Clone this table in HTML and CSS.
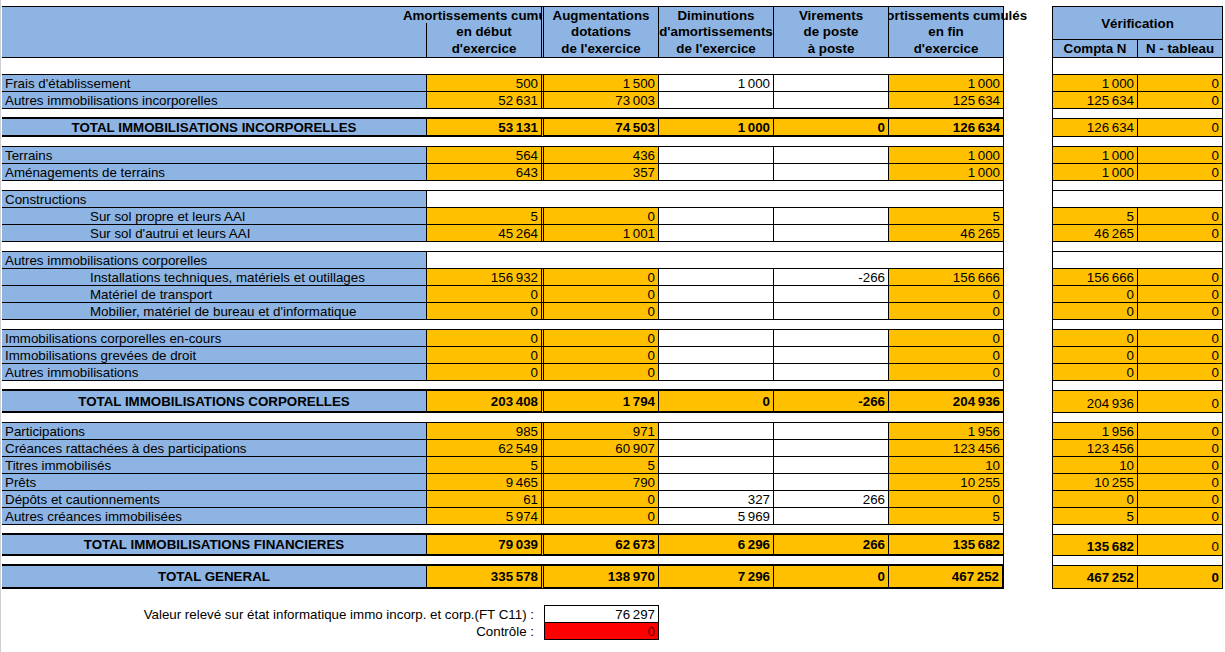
FILE: index.html
```html
<!DOCTYPE html>
<html lang="fr">
<head>
<meta charset="utf-8">
<title>Tableau des amortissements</title>
<link rel="stylesheet" href="styles.css">
</head>
<body>
<div class="sheet">
<table class="grid">
<colgroup>
<col class="c-lab"><col class="c-a"><col class="c-n"><col class="c-n"><col class="c-n"><col class="c-n"><col class="c-gap"><col class="c-f"><col class="c-g">
</colgroup>
<tbody>
<tr class="h1">
  <td class="lab hd"></td>
  <td class="cA hd"><div class="clipL"><div class="ovl"><span>Amortissements cumulés</span></div></div></td>
  <td class="cn hd">Augmentations</td>
  <td class="cn hd">Diminutions</td>
  <td class="cn hd">Virements</td>
  <td class="cn hd"><div class="clipR"><div class="ovl"><span>Amortissements cumulés</span></div></div></td>
  <td class="gap"></td>
  <td class="cF hd verif" colspan="2" rowspan="2">Vérification</td>
</tr>
<tr class="h2">
  <td class="lab hd"></td>
  <td class="cA hd">en début</td>
  <td class="cn hd">dotations</td>
  <td class="cn hd">d'amortissements</td>
  <td class="cn hd">de poste</td>
  <td class="cn hd">en fin</td>
  <td class="gap"></td>
</tr>
<tr class="h3">
  <td class="lab hd"></td>
  <td class="cA hd">d'exercice</td>
  <td class="cn hd">de l'exercice</td>
  <td class="cn hd">de l'exercice</td>
  <td class="cn hd">à poste</td>
  <td class="cn hd">d'exercice</td>
  <td class="gap"></td>
  <td class="cF hd">Compta N</td>
  <td class="cG hd">N - tableau</td>
</tr>
<tr class="blank"><td colspan="6" class="spm"></td><td class="gap"></td><td colspan="2" class="spv"></td></tr>

<tr class="r"><td class="lab">Frais d'établissement</td><td class="cA o">500</td><td class="cn o">1&#8239;500</td><td class="cn w">1&#8239;000</td><td class="cn w"></td><td class="cn o">1&#8239;000</td><td class="gap"></td><td class="cF o">1&#8239;000</td><td class="cG o">0</td></tr>
<tr class="r"><td class="lab">Autres immobilisations incorporelles</td><td class="cA o">52&#8239;631</td><td class="cn o">73&#8239;003</td><td class="cn w"></td><td class="cn w"></td><td class="cn o">125&#8239;634</td><td class="gap"></td><td class="cF o">125&#8239;634</td><td class="cG o">0</td></tr>
<tr class="sp"><td colspan="6" class="spm tk"></td><td class="gap"></td><td colspan="2" class="spv"></td></tr>
<tr class="t ti"><td class="lab">TOTAL IMMOBILISATIONS INCORPORELLES</td><td class="cA o">53&#8239;131</td><td class="cn o">74&#8239;503</td><td class="cn o">1&#8239;000</td><td class="cn o">0</td><td class="cn o">126&#8239;634</td><td class="gap"></td><td class="cF o">126&#8239;634</td><td class="cG o">0</td></tr>
<tr class="sp"><td colspan="6" class="spm"></td><td class="gap"></td><td colspan="2" class="spv"></td></tr>

<tr class="r"><td class="lab">Terrains</td><td class="cA o">564</td><td class="cn o">436</td><td class="cn w"></td><td class="cn w"></td><td class="cn o">1&#8239;000</td><td class="gap"></td><td class="cF o">1&#8239;000</td><td class="cG o">0</td></tr>
<tr class="r"><td class="lab">Aménagements de terrains</td><td class="cA o">643</td><td class="cn o">357</td><td class="cn w"></td><td class="cn w"></td><td class="cn o">1&#8239;000</td><td class="gap"></td><td class="cF o">1&#8239;000</td><td class="cG o">0</td></tr>
<tr class="sp"><td colspan="6" class="spm"></td><td class="gap"></td><td colspan="2" class="spv"></td></tr>

<tr class="r"><td class="lab">Constructions</td><td colspan="5" class="cn w"></td><td class="gap"></td><td colspan="2" class="cF w"></td></tr>
<tr class="r"><td class="lab sub">Sur sol propre et leurs AAI</td><td class="cA o">5</td><td class="cn o">0</td><td class="cn w"></td><td class="cn w"></td><td class="cn o">5</td><td class="gap"></td><td class="cF o">5</td><td class="cG o">0</td></tr>
<tr class="r"><td class="lab sub">Sur sol d'autrui et leurs AAI</td><td class="cA o">45&#8239;264</td><td class="cn o">1&#8239;001</td><td class="cn w"></td><td class="cn w"></td><td class="cn o">46&#8239;265</td><td class="gap"></td><td class="cF o">46&#8239;265</td><td class="cG o">0</td></tr>
<tr class="sp"><td colspan="6" class="spm"></td><td class="gap"></td><td colspan="2" class="spv"></td></tr>

<tr class="r"><td class="lab">Autres immobilisations corporelles</td><td colspan="5" class="cn w"></td><td class="gap"></td><td colspan="2" class="cF w"></td></tr>
<tr class="r"><td class="lab sub">Installations techniques, matériels et outillages</td><td class="cA o">156&#8239;932</td><td class="cn o">0</td><td class="cn w"></td><td class="cn w">-266</td><td class="cn o">156&#8239;666</td><td class="gap"></td><td class="cF o">156&#8239;666</td><td class="cG o">0</td></tr>
<tr class="r"><td class="lab sub">Matériel de transport</td><td class="cA o">0</td><td class="cn o">0</td><td class="cn w"></td><td class="cn w"></td><td class="cn o">0</td><td class="gap"></td><td class="cF o">0</td><td class="cG o">0</td></tr>
<tr class="r"><td class="lab sub">Mobilier, matériel de bureau et d'informatique</td><td class="cA o">0</td><td class="cn o">0</td><td class="cn w"></td><td class="cn w"></td><td class="cn o">0</td><td class="gap"></td><td class="cF o">0</td><td class="cG o">0</td></tr>
<tr class="sp"><td colspan="6" class="spm"></td><td class="gap"></td><td colspan="2" class="spv"></td></tr>

<tr class="r"><td class="lab">Immobilisations corporelles en-cours</td><td class="cA o">0</td><td class="cn o">0</td><td class="cn w"></td><td class="cn w"></td><td class="cn o">0</td><td class="gap"></td><td class="cF o">0</td><td class="cG o">0</td></tr>
<tr class="r"><td class="lab">Immobilisations grevées de droit</td><td class="cA o">0</td><td class="cn o">0</td><td class="cn w"></td><td class="cn w"></td><td class="cn o">0</td><td class="gap"></td><td class="cF o">0</td><td class="cG o">0</td></tr>
<tr class="r"><td class="lab">Autres immobilisations</td><td class="cA o">0</td><td class="cn o">0</td><td class="cn w"></td><td class="cn w"></td><td class="cn o">0</td><td class="gap"></td><td class="cF o">0</td><td class="cG o">0</td></tr>
<tr class="sp"><td colspan="6" class="spm tk"></td><td class="gap"></td><td colspan="2" class="spv"></td></tr>
<tr class="t tc"><td class="lab">TOTAL IMMOBILISATIONS CORPORELLES</td><td class="cA o">203&#8239;408</td><td class="cn o">1&#8239;794</td><td class="cn o">0</td><td class="cn o">-266</td><td class="cn o">204&#8239;936</td><td class="gap"></td><td class="cF o">204&#8239;936</td><td class="cG o">0</td></tr>
<tr class="sp"><td colspan="6" class="spm"></td><td class="gap"></td><td colspan="2" class="spv"></td></tr>

<tr class="r"><td class="lab">Participations</td><td class="cA o">985</td><td class="cn o">971</td><td class="cn w"></td><td class="cn w"></td><td class="cn o">1&#8239;956</td><td class="gap"></td><td class="cF o">1&#8239;956</td><td class="cG o">0</td></tr>
<tr class="r"><td class="lab">Créances rattachées à des participations</td><td class="cA o">62&#8239;549</td><td class="cn o">60&#8239;907</td><td class="cn w"></td><td class="cn w"></td><td class="cn o">123&#8239;456</td><td class="gap"></td><td class="cF o">123&#8239;456</td><td class="cG o">0</td></tr>
<tr class="r"><td class="lab">Titres immobilisés</td><td class="cA o">5</td><td class="cn o">5</td><td class="cn w"></td><td class="cn w"></td><td class="cn o">10</td><td class="gap"></td><td class="cF o">10</td><td class="cG o">0</td></tr>
<tr class="r"><td class="lab">Prêts</td><td class="cA o">9&#8239;465</td><td class="cn o">790</td><td class="cn w"></td><td class="cn w"></td><td class="cn o">10&#8239;255</td><td class="gap"></td><td class="cF o">10&#8239;255</td><td class="cG o">0</td></tr>
<tr class="r"><td class="lab">Dépôts et cautionnements</td><td class="cA o">61</td><td class="cn o">0</td><td class="cn w">327</td><td class="cn w">266</td><td class="cn o">0</td><td class="gap"></td><td class="cF o">0</td><td class="cG o">0</td></tr>
<tr class="r"><td class="lab">Autres créances immobilisées</td><td class="cA o">5&#8239;974</td><td class="cn o">0</td><td class="cn w">5&#8239;969</td><td class="cn w"></td><td class="cn o">5</td><td class="gap"></td><td class="cF o">5</td><td class="cG o">0</td></tr>
<tr class="sp"><td colspan="6" class="spm tk"></td><td class="gap"></td><td colspan="2" class="spv"></td></tr>
<tr class="t tf"><td class="lab">TOTAL IMMOBILISATIONS FINANCIERES</td><td class="cA o">79&#8239;039</td><td class="cn o">62&#8239;673</td><td class="cn o">6&#8239;296</td><td class="cn o">266</td><td class="cn o">135&#8239;682</td><td class="gap"></td><td class="cF o b">135&#8239;682</td><td class="cG o">0</td></tr>
<tr class="sp"><td colspan="6" class="spm tk"></td><td class="gap"></td><td colspan="2" class="spv"></td></tr>
<tr class="t tg"><td class="lab">TOTAL GENERAL</td><td class="cA o">335&#8239;578</td><td class="cn o">138&#8239;970</td><td class="cn o">7&#8239;296</td><td class="cn o">0</td><td class="cn o rk">467&#8239;252</td><td class="gap"></td><td class="cF o b lo">467&#8239;252</td><td class="cG o b lo">0</td></tr>

<tr class="gr"><td colspan="9" class="gap"></td></tr>
<tr class="nv"><td colspan="2" class="note">Valeur relevé sur état informatique immo incorp. et corp.(FT C11) :</td><td class="box">76&#8239;297</td><td colspan="6" class="gap"></td></tr>
<tr class="nc"><td colspan="2" class="note">Contrôle :</td><td class="box red">0</td><td colspan="6" class="gap"></td></tr>
</tbody>
</table>
</div>
</body>
</html>
```

FILE: styles.css
```css
* { box-sizing: border-box; }
html, body { margin: 0; padding: 0; background: #fff; }
body {
  font-family: "Liberation Sans", Arial, sans-serif;
  font-size: 13.33px;
  color: #000;
}
.sheet {
  border-left: 1px solid #cfcfcf;
  padding: 6px 0 0 1px;
  min-height: 100vh;
}
.grid {
  border-collapse: separate;
  border-spacing: 0;
  table-layout: fixed;
  width: 1221px;
}
.c-lab { width: 425px; }
.c-a { width: 117px; }
.c-n { width: 115px; }
.c-gap { width: 48px; }
.c-f { width: 86px; }
.c-g { width: 85px; }

td {
  padding: 0 3px;
  border: 0 solid #000;
  white-space: nowrap;
  overflow: hidden;
  line-height: 15px;
  vertical-align: middle;
}

/* row heights */
.h1, .h2 { height: 17px; }
.h3 { height: 18px; }
.blank { height: 17px; }
.r { height: 17px; }
.sp { height: 10px; }
.ti { height: 18px; }
.tc { height: 22px; }
.tf { height: 21px; }
.tg { height: 23px; }
.gr { height: 16px; }
.nv { height: 18px; }
.nc { height: 17px; }

/* cells */
.lab {
  background: #8db4e2;
  border-right-width: 1px;
  border-bottom-width: 1px;
  text-align: left;
  padding-left: 3px;
}
.sub { padding-left: 88px; }
.cA { border-right: 3px double #000; border-bottom-width: 1px; }
.cn { border-right-width: 1px; border-bottom-width: 1px; }
.cF { border-left-width: 1px; border-right-width: 1px; border-bottom-width: 1px; }
.cG { border-right-width: 1px; border-bottom-width: 1px; }
.gap { border: 0; background: transparent; }
.o { background: #ffc000; text-align: right; }
.w { background: #fff; text-align: right; }
.rk { border-right-width: 2px; }

/* header */
.hd {
  background: #8db4e2;
  font-weight: bold;
  text-align: center;
  padding: 0;
  overflow: visible;
}
.h1 td:not(.gap) { border-top-width: 1px; }
.h1 td, .h2 td { border-bottom-width: 0; }
.h1 .lab { border-right-width: 0; }
.h1 td.verif { border-bottom-width: 1px; }

/* header text overflowing into the neighbouring empty cell, clipped on the other side */
.clipL { margin-left: -120px; overflow: hidden; }
.clipL .ovl { margin-left: 120px; }
.clipR { margin-right: -120px; overflow: hidden; }
.clipR .ovl { margin-right: 120px; }
.ovl {
  display: flex;
  justify-content: center;
  white-space: nowrap;
}
.ovl span { flex: none; }

/* spacers */
.spm { border-right-width: 1px; border-bottom-width: 1px; background: #fff; }
.spm.tk { border-bottom-width: 2px; }
.spv { border-left-width: 1px; border-right-width: 1px; border-bottom-width: 1px; background: #fff; }

/* totals */
.t td { font-weight: bold; }
.t .lab { text-align: center; border-bottom-width: 2px; }
.t .cA, .t .cn { border-bottom-width: 2px; }
.t .cF, .t .cG {
  font-weight: normal;
  vertical-align: bottom;
  padding-bottom: 1px;
}
.t .cF.b, .t .cG.b { font-weight: bold; }
.t .cF.lo, .t .cG.lo { padding-bottom: 3px; }

/* bottom control */
.note { text-align: right; padding-right: 10px; }
.box {
  border: 1px solid #000;
  background: #fff;
  text-align: right;
}
.box.red {
  border-top-width: 0;
  background: #ff0000;
  color: #5a0000;
}
```
